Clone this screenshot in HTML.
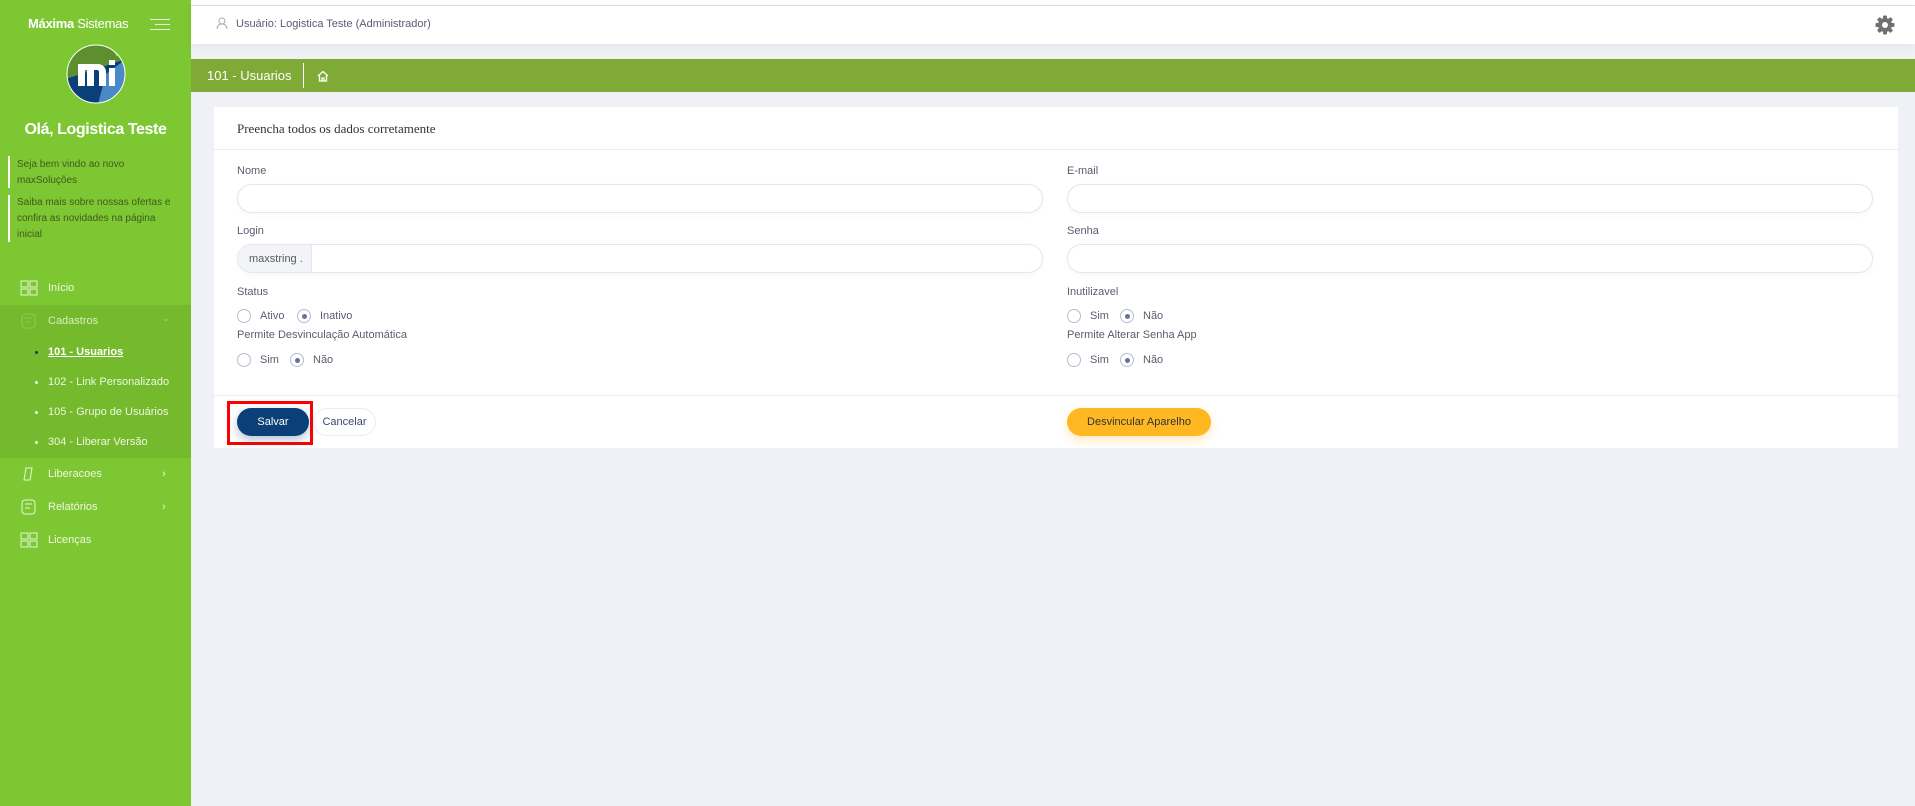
<!DOCTYPE html>
<html><head><meta charset="utf-8"><style>
*{box-sizing:border-box;margin:0;padding:0}
body{width:1915px;height:806px;overflow:hidden;background:#f0f1f7;font-family:"Liberation Sans",sans-serif;position:relative;color:#595d6e}
.sb{position:absolute;left:0;top:0;width:191px;height:806px;background:#7dc732}
.topline{position:absolute;left:0;top:0;width:1915px;height:6px;background:#fff;border-bottom:1px solid #ddd}
.hdr{position:absolute;left:191px;top:6px;width:1724px;height:38px;background:#fff;box-shadow:0 3px 8px rgba(0,0,0,.05)}
.bc{position:absolute;left:191px;top:59px;width:1724px;height:33px;background:#80aa36;color:#fff;font-size:13px}
.card{position:absolute;left:214px;top:107px;width:1684px;height:341px;background:#fff}
.lbl{position:absolute;font-size:11px;color:#595d6e}
.inp{position:absolute;height:29px;border:1px solid #e5e6ef;border-radius:15px;background:#fff;box-shadow:0 2px 6px rgba(0,0,0,.03)}
.rad{position:absolute;width:14px;height:14px;border:1px solid #b8bccc;border-radius:50%}
.rad.on::after{content:"";position:absolute;left:4px;top:4px;width:5px;height:5px;border-radius:50%;background:#6c7293}
.rt{position:absolute;font-size:11px;color:#595d6e}
.si{position:absolute;left:48px;color:#eef7e3;font-size:11px}
.dot{position:absolute;left:35px;width:3px;height:3px;border-radius:50%;background:#e8f5da}
.ico{position:absolute;left:20px;width:18px;height:16px}
</style></head><body>
<div class="topline"></div>
<div class="sb">
 <div style="position:absolute;left:28px;top:16px;color:#fff;font-size:13px;letter-spacing:-.3px"><b>Máxima</b> Sistemas</div>
 <div style="position:absolute;left:150px;top:19px;width:20px;height:1px;background:#e8f5da"></div>
 <div style="position:absolute;left:155px;top:24px;width:15px;height:1px;background:#e8f5da"></div>
 <div style="position:absolute;left:150px;top:29px;width:20px;height:1px;background:#e8f5da"></div>
 <svg style="position:absolute;left:66px;top:44px" width="60" height="60" viewBox="0 0 60 60"><defs><clipPath id="c"><circle cx="30" cy="30" r="29"/></clipPath></defs><g clip-path="url(#c)"><rect width="60" height="60" fill="#5e8f2e"/><polygon points="0,35 60,15 60,60 0,60" fill="#0b3f78"/><polygon points="40,30 60,15 60,60 32,60" fill="#4a89c8"/><polygon points="44,0 60,0 60,14 50,12" fill="#7dc732"/><path d="M12 42V20h20a8 8 0 0 1 8 8v14h-7V28a2 2 0 0 0-2-2h-3v16h-7V26h-2v16z" fill="#fff"/><rect x="43" y="24" width="6" height="18" fill="#fff"/><rect x="43" y="16" width="6" height="5" fill="#fff"/></g><circle cx="30" cy="30" r="29" fill="none" stroke="#fff" stroke-width="1"/></svg>
 <div style="position:absolute;left:0;width:191px;top:121px;text-align:center;color:#fff;font-size:16px;font-weight:bold;letter-spacing:-.4px">Olá, Logistica Teste</div>
 <div style="position:absolute;left:8px;top:156px;width:2px;height:32px;background:#fff"></div>
 <div style="position:absolute;left:17px;top:157px;font-size:10px;color:#3e5a1f;line-height:16px">Seja bem vindo ao novo<br>maxSoluções</div>
 <div style="position:absolute;left:8px;top:195px;width:2px;height:47px;background:#fff"></div>
 <div style="position:absolute;left:17px;top:195px;font-size:10px;color:#3e5a1f;line-height:16px">Saiba mais sobre nossas ofertas e<br>confira as novidades na página<br>inicial</div>
 <svg class="ico" style="top:280px" viewBox="0 0 18 16"><g fill="none" stroke="#e8f5da"><rect x="1" y="1" width="7" height="6"/><rect x="10" y="1" width="7" height="6"/><rect x="1" y="9" width="7" height="6"/><rect x="10" y="9" width="7" height="6"/></g></svg>
 <div class="si" style="top:282px">Início</div>
 <div style="position:absolute;left:0;top:305px;width:191px;height:153px;background:#74ba2c"></div>
 <svg class="ico" style="top:313px" viewBox="0 0 18 16"><g fill="none" stroke="#8fc85a"><rect x="2" y="1" width="13" height="14" rx="3"/><path d="M5 5h7M5 9h5"/></g></svg>
 <div class="si" style="top:315px;color:#d8efc0">Cadastros</div>
 <div style="position:absolute;left:162px;top:313px;color:#a9d878;font-size:9px">⌄</div>
 <div class="dot" style="top:351px;background:#0b3f78"></div><div class="si" style="top:346px;color:#fff;font-weight:bold;text-decoration:underline">101 - Usuarios</div>
 <div class="dot" style="top:381px"></div><div class="si" style="top:376px">102 - Link Personalizado</div>
 <div class="dot" style="top:411px"></div><div class="si" style="top:406px">105 - Grupo de Usuários</div>
 <div class="dot" style="top:441px"></div><div class="si" style="top:436px">304 - Liberar Versão</div>
 <svg class="ico" style="top:466px" viewBox="0 0 18 16"><path d="M6 2h6l-2 12H4z" fill="none" stroke="#e8f5da"/></svg>
 <div class="si" style="top:468px">Liberacoes</div><div class="si" style="left:162px;top:468px">›</div>
 <svg class="ico" style="top:499px" viewBox="0 0 18 16"><g fill="none" stroke="#e8f5da"><rect x="2" y="1" width="13" height="14" rx="3"/><path d="M5 5h7M5 9h5"/></g></svg>
 <div class="si" style="top:501px">Relatórios</div><div class="si" style="left:162px;top:501px">›</div>
 <svg class="ico" style="top:532px" viewBox="0 0 18 16"><g fill="none" stroke="#e8f5da"><rect x="1" y="1" width="7" height="6"/><rect x="10" y="1" width="7" height="6"/><rect x="1" y="9" width="7" height="6"/><rect x="10" y="9" width="7" height="6"/></g></svg>
 <div class="si" style="top:534px">Licenças</div>
</div>
<div class="hdr">
 <svg style="position:absolute;left:25px;top:11px" width="12" height="13" viewBox="0 0 12 13"><g fill="none" stroke="#aaa"><circle cx="6" cy="4" r="3"/><path d="M1 12c0-3 2-5 5-5s5 2 5 5"/></g></svg>
 <div style="position:absolute;left:45px;top:12px;font-size:11px;color:#595d6e">Usuário: Logistica Teste (Administrador)</div>
 <svg style="position:absolute;left:1684px;top:9px" width="20" height="20" viewBox="0 0 20 20"><g fill="#707070"><circle cx="10" cy="10" r="7"/><rect x="8" y="0.5" width="4" height="19" rx="1"/><rect x="8" y="0.5" width="4" height="19" rx="1" transform="rotate(45 10 10)"/><rect x="8" y="0.5" width="4" height="19" rx="1" transform="rotate(90 10 10)"/><rect x="8" y="0.5" width="4" height="19" rx="1" transform="rotate(135 10 10)"/></g><circle cx="10" cy="10" r="3" fill="#fff"/></svg>
</div>
<div class="bc">
 <div style="position:absolute;left:16px;top:9px">101 - Usuarios</div>
 <div style="position:absolute;left:112px;top:4px;width:1px;height:25px;background:#fff"></div>
 <svg style="position:absolute;left:126px;top:11px" width="12" height="12" viewBox="0 0 12 12"><path d="M1 6L6 1.5 11 6M2.5 5v6h7V5M5 11V8h2v3" fill="none" stroke="#fff" stroke-width="1.3"/></svg>
</div>
<div class="card">
 <div style="position:absolute;left:23px;top:14px;font-family:'Liberation Serif',serif;font-size:13px;color:#333">Preencha todos os dados corretamente</div>
 <div style="position:absolute;left:0;top:42px;width:100%;height:1px;background:#ebedf2"></div>
 <div class="lbl" style="left:23px;top:58px">Nome</div>
 <div class="inp" style="left:23px;top:77px;width:806px"></div>
 <div class="lbl" style="left:23px;top:118px">Login</div>
 <div class="inp" style="left:23px;top:137px;width:806px;overflow:hidden"><div style="position:absolute;left:0;top:0;width:74px;height:29px;background:#f3f4f8;border-right:1px solid #e5e6ef;font-size:11px;color:#575962;padding:8px 0 0 11px">maxstring .</div></div>
 <div class="lbl" style="left:23px;top:179px">Status</div>
 <div class="rad" style="left:23px;top:202px"></div><div class="rt" style="left:46px;top:203px">Ativo</div>
 <div class="rad on" style="left:83px;top:202px"></div><div class="rt" style="left:106px;top:203px">Inativo</div>
 <div class="lbl" style="left:23px;top:222px">Permite Desvinculação Automática</div>
 <div class="rad" style="left:23px;top:246px"></div><div class="rt" style="left:46px;top:247px">Sim</div>
 <div class="rad on" style="left:76px;top:246px"></div><div class="rt" style="left:99px;top:247px">Não</div>

 <div class="lbl" style="left:853px;top:58px">E-mail</div>
 <div class="inp" style="left:853px;top:77px;width:806px"></div>
 <div class="lbl" style="left:853px;top:118px">Senha</div>
 <div class="inp" style="left:853px;top:137px;width:806px"></div>
 <div class="lbl" style="left:853px;top:179px">Inutilizavel</div>
 <div class="rad" style="left:853px;top:202px"></div><div class="rt" style="left:876px;top:203px">Sim</div>
 <div class="rad on" style="left:906px;top:202px"></div><div class="rt" style="left:929px;top:203px">Não</div>
 <div class="lbl" style="left:853px;top:222px">Permite Alterar Senha App</div>
 <div class="rad" style="left:853px;top:246px"></div><div class="rt" style="left:876px;top:247px">Sim</div>
 <div class="rad on" style="left:906px;top:246px"></div><div class="rt" style="left:929px;top:247px">Não</div>

 <div style="position:absolute;left:0;top:288px;width:100%;height:1px;background:#ebedf2"></div>
 <div style="position:absolute;left:13px;top:294px;width:86px;height:44px;border:3px solid #f00"></div>
 <div style="position:absolute;left:23px;top:301px;width:72px;height:28px;border-radius:14px;background:#0b3f78;color:#fff;font-size:11px;text-align:center;line-height:28px;box-shadow:0 4px 10px rgba(11,63,120,.3)">Salvar</div>
 <div style="position:absolute;left:99px;top:301px;width:63px;height:28px;border-radius:14px;border:1px solid #ebedf2;color:#3d4a6b;font-size:11px;text-align:center;line-height:26px">Cancelar</div>
 <div style="position:absolute;left:853px;top:301px;width:144px;height:28px;border-radius:14px;background:#ffb822;color:#333;font-size:11px;text-align:center;line-height:28px;box-shadow:0 4px 10px rgba(255,184,34,.3)">Desvincular Aparelho</div>
</div>
</body></html>
